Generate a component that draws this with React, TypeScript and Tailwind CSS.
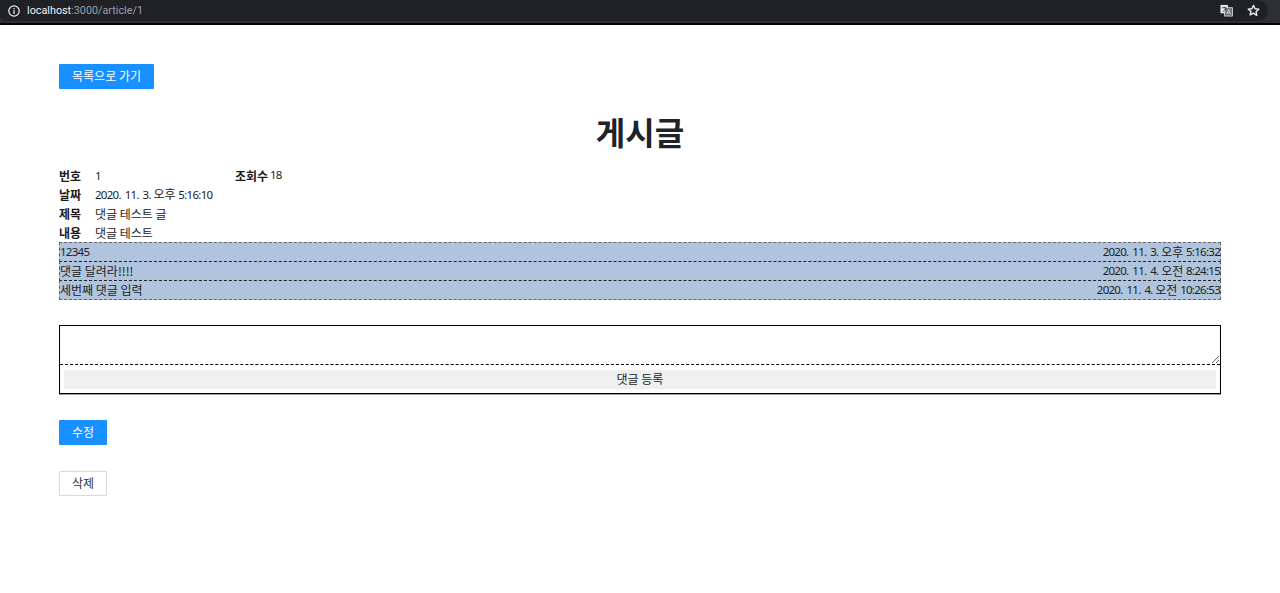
import React from "react";

const font = { fontFamily: '"Noto Sans CJK KR", "Noto Sans", sans-serif' };

function Num({ children }: { children: React.ReactNode }) {
  return (
    <span className="relative top-[-0.5px] text-[11.5px] tracking-[-0.72px] [font-family:'Noto_Sans',sans-serif] [word-spacing:1.6px]">
      {children}
    </span>
  );
}

function DateText({ d, ap, t }: { d: string; ap: string; t: string }) {
  return (
    <span>
      <Num>{d}</Num> {ap} <Num>{t}</Num>
    </span>
  );
}

function BrowserBar() {
  return (
    <div className="flex h-[25px] flex-col bg-[#050506]">
      <div className="h-[23px] bg-[#2e2f33]">
        <div className="mr-[12px] flex h-[21px] items-center justify-between rounded-r-[11px] rounded-bl-[6px] bg-[#202125] px-[8px]">
          <div className="flex items-center gap-[7px]">
            <svg width="12" height="12" viewBox="0 0 12 12" fill="none" stroke="#f1f3f4" strokeWidth="1.2">
              <circle cx="6" cy="6" r="5.2" />
              <path d="M6 5.3V9M6 3v1.2" />
            </svg>
            <span className="pt-px text-[10.8px] leading-none text-[#f1f3f4] [font-family:Roboto,sans-serif]">
              localhost<span className="text-[#9aa0a6]">:3000/article/1</span>
            </span>
          </div>
          <div className="flex items-center gap-[14px]">
            <svg width="13" height="13" viewBox="0 0 14 14">
              <rect x="0.5" y="1" width="8" height="9" fill="#e8eaed" />
              <rect x="5" y="4" width="8.5" height="9" fill="#70757a" stroke="#e8eaed" strokeWidth="0.8" />
              <path d="M2 4h5M4.5 3v1M3 8c2-1 3-2 3-4" stroke="#202125" strokeWidth="0.8" fill="none" />
              <path d="M7.3 11l2-5 2 5M8 9.5h2.6" stroke="#e8eaed" strokeWidth="0.8" fill="none" />
            </svg>
            <svg width="13" height="13" viewBox="0 0 24 24" fill="none" stroke="#f1f3f4" strokeWidth="2.4" strokeLinejoin="round">
              <path d="M12 2.5l2.9 6.3 6.9.8-5.1 4.7 1.4 6.8L12 16.8l-6.1 3.3 1.4-6.8L2.2 9.6l6.9-.8z" />
            </svg>
          </div>
        </div>
      </div>
    </div>
  );
}

function Info({ label, value, extra }: { label: string; value: React.ReactNode; extra?: React.ReactNode }) {
  return (
    <div className="flex h-[19px] items-center">
      <span className="w-[36px] font-bold text-[#1a1a1a]">{label}</span>
      <span className="w-[140px]">{value}</span>
      {extra}
    </div>
  );
}

function Comment({ text, date }: { text: React.ReactNode; date: React.ReactNode }) {
  return (
    <div className="-mt-px flex h-[20px] items-center justify-between border border-dashed border-x-[#555] border-y-[#222] bg-[#b0c4de] first:mt-0 first:border-t-[#666] last:border-b-[#666]">
      <span>{text}</span>
      <span>{date}</span>
    </div>
  );
}

export default function App() {
  return (
    <div className="h-[593px] overflow-hidden bg-white text-[12px] text-[#222]" style={font}>
      <BrowserBar />
      <main className="flex flex-col px-[59px] pt-[39px]">
        <button className="h-[25px] w-[95px] rounded-[1px] bg-[#1890ff] pb-px text-[12px] text-white">목록으로 가기</button>
        <h1 className="mb-[13px] mt-[20px] h-[44px] text-center text-[32px] font-bold leading-[44px] text-[#1f2328]">게시글</h1>
        <section className="flex flex-col">
          <Info
            label="번호"
            value={<Num>1</Num>}
            extra={
              <>
                <span className="w-[35px] font-bold text-[#1a1a1a]">조회수</span>
                <Num>18</Num>
              </>
            }
          />
          <Info label="날짜" value={<DateText d="2020. 11. 3." ap="오후" t="5:16:10" />} />
          <Info label="제목" value="댓글 테스트 글" />
          <Info label="내용" value="댓글 테스트" />
        </section>
        <section className="flex flex-col">
          <Comment text={<Num>12345</Num>} date={<DateText d="2020. 11. 3." ap="오후" t="5:16:32" />} />
          <Comment text="댓글 달려라!!!!" date={<DateText d="2020. 11. 4." ap="오전" t="8:24:15" />} />
          <Comment text="세번째 댓글 입력" date={<DateText d="2020. 11. 4." ap="오전" t="10:26:53" />} />
        </section>
        <form className="mt-[25px] flex h-[69px] flex-col border border-black shadow-[0_1px_0_#999]">
          <textarea className="block h-[39px] w-full resize-y border-b border-dashed border-black outline-none" />
          <div className="px-[4px] pt-[5px]">
            <button type="button" className="h-[19px] w-full bg-[#efefef] pb-[2px] text-[12px] text-[#222]">댓글 등록</button>
          </div>
        </form>
        <button className="mt-[26px] h-[25px] w-[48px] rounded-[1px] bg-[#1890ff] pb-px text-[12px] text-white">수정</button>
        <button className="mt-[26px] h-[25px] w-[48px] rounded-[1px] border border-[#d9d9d9] bg-white pb-px text-[12px] text-[#333]">삭제</button>
      </main>
    </div>
  );
}
